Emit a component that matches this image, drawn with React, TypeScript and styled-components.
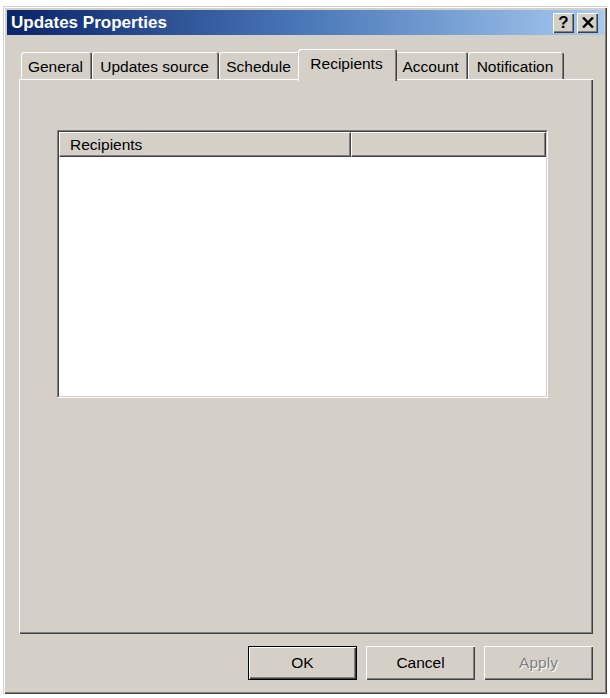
import React from "react";
import styled, { createGlobalStyle } from "styled-components";

const GlobalStyle = createGlobalStyle`
  html, body {
    margin: 0;
    padding: 0;
    background: #ffffff;
  }
  body {
    font-family: "Liberation Sans", Arial, sans-serif;
  }
`;

// tab widths follow the original dialog's layout
const tabs = [
  { label: "General", width: 71 },
  { label: "Updates source", width: 127 },
  { label: "Schedule", width: 81 },
  { label: "Recipients", width: 95 },
  { label: "Account", width: 73 },
  { label: "Notification", width: 96 },
];

const App = () => {
  return (
    <>
      <GlobalStyle />
      <Window>
        <TitleBar>
          <Title>Updates Properties</Title>
          <CaptionButtons>
            <CaptionButton>
              <HelpGlyph>?</HelpGlyph>
            </CaptionButton>
            <CaptionButton>
              <svg width="12" height="11" viewBox="0 0 12 11">
                <path d="M1 0.5 L11 10.5 M11 0.5 L1 10.5" stroke="#000" strokeWidth="2.4" />
              </svg>
            </CaptionButton>
          </CaptionButtons>
        </TitleBar>

        <Body>
          <TabStrip>
            {tabs.map((t) => (
              <Tab key={t.label} $width={t.width} $active={t.label === "Recipients"}>
                {t.label}
              </Tab>
            ))}
          </TabStrip>

          <Panel>
            <ListView>
              <ListInner>
                <ListHeader>
                  <HeaderCell $width={292}>Recipients</HeaderCell>
                  <HeaderCell />
                </ListHeader>
                <ListBody />
              </ListInner>
            </ListView>
          </Panel>

          <ButtonRow>
            <Button $default>OK</Button>
            <Button>Cancel</Button>
            <Button disabled>Apply</Button>
          </ButtonRow>
        </Body>
      </Window>
    </>
  );
};

export default App;

const Window = styled.div`
  box-sizing: border-box;
  margin: 6px 0 0 3px;
  width: 604px;
  height: 688px;
  padding: 4px 3px 3px 4px;
  background: #d4d0c8;
  display: flex;
  flex-direction: column;
  box-shadow: inset 1px 1px #d4d0c8, inset 2px 2px #ffffff,
    inset -1px -1px #404040, inset -2px -2px #808080;
`;

const TitleBar = styled.div`
  height: 25px;
  flex-shrink: 0;
  display: flex;
  align-items: center;
  justify-content: space-between;
  padding: 0 6px 0 4px;
  background: linear-gradient(to right, #0a246a 0%, #4a78b8 50%, #a6caf0 100%);
`;

const Title = styled.span`
  color: #ffffff;
  font-family: "Liberation Sans", Arial, sans-serif;
  font-weight: bold;
  font-size: 17px;
  line-height: 25px;
`;

const CaptionButtons = styled.div`
  display: flex;
  gap: 3px;
`;

const CaptionButton = styled.div`
  box-sizing: border-box;
  width: 21px;
  height: 20px;
  display: flex;
  align-items: center;
  justify-content: center;
  background: #d4d0c8;
  box-shadow: inset 1px 1px #ffffff, inset -1px -1px #404040,
    inset -2px -2px #808080;
`;

const HelpGlyph = styled.span`
  font-family: "Liberation Sans", Arial, sans-serif;
  font-weight: bold;
  font-size: 17px;
  line-height: 1;
  color: #000;
`;

const Body = styled.div`
  flex: 1;
  display: flex;
  flex-direction: column;
  padding: 14px 11px 0 12px;
`;

const TabStrip = styled.div`
  display: flex;
  align-items: flex-start;
  height: 30px;
  padding-left: 2px;
`;

const Tab = styled.div<{ $active?: boolean; $width: number }>`
  position: relative;
  z-index: ${(p) => (p.$active ? 2 : 0)};
  box-sizing: border-box;
  width: ${(p) => (p.$active ? p.$width + 4 : p.$width)}px;
  height: ${(p) => (p.$active ? 32 : 27)}px;
  margin: ${(p) => (p.$active ? "0 -2px 0" : "3px 0 0")};
  padding-top: 6px;
  padding-right: 2px;
  text-align: center;
  font-size: 15.5px;
  line-height: 18px;
  color: #000;
  white-space: nowrap;
  background: #d4d0c8;
  border-radius: 3px 3px 0 0;
  box-shadow: inset 1px 1px #ffffff, inset -1px 0 #404040, inset -2px 0 #808080;
`;

const Panel = styled.div`
  position: relative;
  z-index: 1;
  box-sizing: border-box;
  height: 555px;
  padding: 51px 0 0 38px;
  background: #d4d0c8;
  box-shadow: inset 1px 1px #ffffff, inset -1px -1px #404040,
    inset -2px -2px #808080;
`;

const ListView = styled.div`
  box-sizing: border-box;
  width: 491px;
  height: 268px;
  border: 1px solid;
  border-color: #808080 #ffffff #ffffff #808080;
`;

const ListInner = styled.div`
  box-sizing: border-box;
  height: 100%;
  display: flex;
  flex-direction: column;
  border: 1px solid;
  border-color: #404040 #d4d0c8 #d4d0c8 #404040;
  background: #ffffff;
`;

const ListHeader = styled.div`
  display: flex;
  height: 25px;
  flex-shrink: 0;
`;

const HeaderCell = styled.div<{ $width?: number }>`
  box-sizing: border-box;
  ${(p) => (p.$width ? `width: ${p.$width}px;` : "flex: 1;")}
  padding: 3px 0 0 10px;
  font-size: 15.5px;
  line-height: 18px;
  color: #000;
  background: #d4d0c8;
  border-top: 1px solid #ffffff;
  border-left: 1px solid #ffffff;
  border-right: 1px solid #404040;
  border-bottom: 1px solid #404040;
  box-shadow: inset -1px -1px #808080;
`;

const ListBody = styled.div`
  flex: 1;
  background: #ffffff;
`;

const ButtonRow = styled.div`
  display: flex;
  justify-content: flex-end;
  gap: 9px;
  margin-top: 12px;
`;

const Button = styled.button<{ $default?: boolean }>`
  box-sizing: border-box;
  width: 109px;
  height: 34px;
  padding: 0;
  font-family: "Liberation Sans", Arial, sans-serif;
  font-size: 15.5px;
  color: #000;
  background: #d4d0c8;
  border: ${(p) => (p.$default ? "1px solid #000" : "0")};
  box-shadow: inset 1px 1px #ffffff, inset -1px -1px #404040,
    inset -2px -2px #808080;

  &:disabled {
    color: #808080;
    text-shadow: 1px 1px #ffffff;
  }
`;
